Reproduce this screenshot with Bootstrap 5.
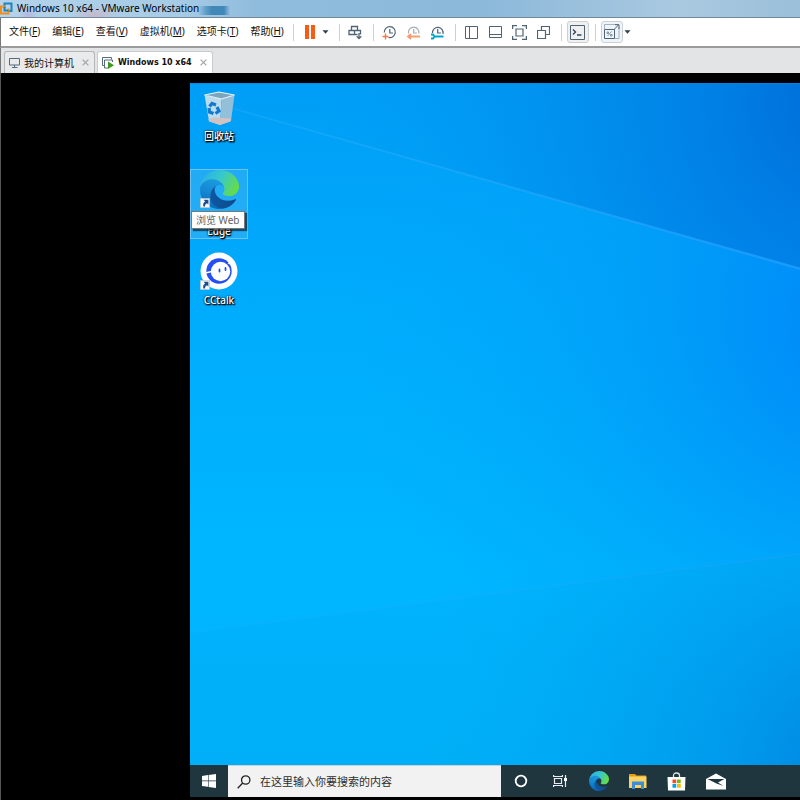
<!DOCTYPE html>
<html lang="zh-CN">
<head>
<meta charset="utf-8">
<meta name="viewport" content="width=device-width, initial-scale=1">
<title>Windows 10 x64 - VMware Workstation</title>
<link rel="stylesheet" href="https://cdn.jsdelivr.net/npm/bootstrap@5.3.0/dist/css/bootstrap.min.css">
<style>
  body { font-family: "Noto Sans", "Noto Sans CJK SC", sans-serif; font-size: 10px; line-height: 14px; color: #111; background: #000; }
  svg { display: block; flex: none; }
  button { padding: 0; border: 0; background: none; color: inherit; }
  .title-bar { height: 18px; border-bottom: 1px solid #71899c;
    background:
      linear-gradient(90deg, transparent 198px, #5f9dc9 206px, #4187b8 212px, #4187b8 224px, transparent 230px) 0 6px / 100% 9px no-repeat,
      radial-gradient(ellipse 24px 10px at 95px 15px, #c3b9cc, transparent),
      radial-gradient(ellipse 10px 8px at 28px 15px, #b7b5dc, transparent),
      linear-gradient(90deg, #b5d3ea 0, #a5cbe6 180px, #8fbbdc 260px, #8cb8da 60%, #a9c9e0 85%, #9bbfd9); }
  .title-bar h1 { font-size: inherit; line-height: 16px; color: #000; }
  .menu-bar { height: 30px; background: #fff; border-left: 1px solid #777; border-bottom: 2px solid #9b9b9b; }
  .menu-list { gap: 12px; padding: 0 4px 2px 8px; }
  .menu-list button { line-height: 14px; white-space: nowrap; }
  .tool { width: 24px; height: 22px; display: flex; align-items: center; justify-content: center; color: #4f6373; }
  .tool-caret { width: 12px; height: 22px; display: flex; align-items: center; color: #2b4054; }
  .tool-on { background: #f0f0f1; border: 1px solid #cdcfd1; border-radius: 3px; width: 22px; margin: 0 1px; }
  .tool-blue { background: #edf4fa; }
  .rule { width: 1px; height: 17px; margin: 0 4px 0 5px; background: #cfcfcf; flex: none; }
  .tab-strip { height: 25px; background: #e3e4e6; border-left: 1px solid #777; padding: 3px 3px 0; gap: 2px; }
  .vm-tab { height: 22px; border: 1px solid #b4b6b8; border-bottom: 0; border-radius: 3px 3px 0 0; background: #e9eaeb; padding: 0 5px 0 4px; gap: 4px; }
  .vm-tab.current { background: #fff; border-color: #cbcccd; }
  .tab-title { line-height: 16px; white-space: nowrap; }
  .vm-tab.current .tab-title { font-family: "DejaVu Sans", sans-serif; font-size: 8px; }
  .vm-tab .x { color: #a6a6a6; margin-left: 4px; }
  .vm-view { border-left: 1px solid #555; padding: 10px 0 3px 189px; }
  .wallpaper { z-index: 0; }
  .icon-list { z-index: 1; padding: 4px 0; gap: 12px; }
  .desk-icon { width: 58px; min-height: 70px; border: 1px solid transparent; color: #fff; text-shadow: 1px 1px 1px #000, 0 0 2px #000, 1px 1px 2px #000; font-weight: 500; }
  .desk-icon.hot { border-color: #6bc0f4; background: rgba(90, 185, 240, .38); }
  .desk-icon .art { width: 40px; height: 41px; }
  .desk-icon.hot .name { padding-top: 13px; }
  .name { line-height: 14px; }
  .tip { left: 0; top: 41px; z-index: 2; background: #fff; color: #626262; border: 1px solid #777; line-height: 16px; padding: 0 4px; white-space: nowrap; text-shadow: none; box-shadow: 2px 2px 1px rgba(0, 0, 0, .55); font-weight: 400; }
  .task-bar { z-index: 1; background: #20363f; height: 32px; }
  .task-bar button { width: 39px; display: flex; align-items: center; justify-content: center; flex: none; }
  .task-bar .start { width: 38px; }
  .search-box { flex: 0 1 273px; background: #f2f2f2; padding-left: 9px; gap: 9px; border-top: 1px solid #d0d0d0; }
  .search-box input { font-size: 11px; border: 0; background: none; outline: 0; width: 100%; padding: 0; }
  .search-box input::placeholder { color: #2e2e2e; opacity: 1; }
</style>
<script src="https://cdn.jsdelivr.net/npm/bootstrap@5.3.0/dist/js/bootstrap.bundle.min.js"></script>
</head>
<body class="d-flex flex-column min-vh-100">

<svg width="0" height="0" class="position-absolute" aria-hidden="true">
  <defs>
    <linearGradient id="edgeDark" x1="0" x2="1"><stop stop-color="#0c59a4"/><stop offset="1" stop-color="#114a8b"/></linearGradient>
    <linearGradient id="edgeMid" x1=".6" y1="0" x2=".3" y2="1"><stop stop-color="#1b9de2"/><stop offset=".5" stop-color="#1588d2"/><stop offset="1" stop-color="#0a64b4"/></linearGradient>
    <linearGradient id="edgeTop" x1="0" y1=".2" x2="1" y2=".55"><stop stop-color="#27aee8"/><stop offset=".5" stop-color="#37c8cd"/><stop offset="1" stop-color="#67dc46"/></linearGradient>
    <symbol id="edge" viewBox="0 0 256 256">
      <path fill="url(#edgeDark)" d="M231.07 190.54c-3.45 1.79-7 3.38-10.63 4.77a101.83 101.83 0 0 1-35.9 6.46c-47.32 0-88.54-32.55-88.54-74.32A31.48 31.48 0 0 1 112.46 100.05c-42.8 1.8-53.8 46.4-53.8 72.53 0 73.88 68.09 81.37 82.76 81.37 7.91 0 19.84-2.3 27-4.56l1.31-.44a128.34 128.34 0 0 0 66.6-52.8 4 4 0 0 0-5.26-5.61z"/>
      <path fill="url(#edgeMid)" d="M105.73 241.42a79.2 79.2 0 0 1-22.74-21.34A80.72 80.72 0 0 1 112.46 100.05c3.12-1.47 8.45-4.13 15.54-4a32.35 32.35 0 0 1 25.69 13 31.88 31.88 0 0 1 6.36 18.66c0-.21 24.46-79.6-80-79.6-43.9 0-80 41.66-80 78.21a130.15 130.15 0 0 0 12.11 56 128 128 0 0 0 156.38 67.11 75.55 75.55 0 0 1-62.78-8z"/>
      <path fill="url(#edgeTop)" d="M152.33 148.86c-.81 1.05-3.3 2.5-3.3 5.66 0 2.61 1.7 5.12 4.72 7.23 14.38 10 41.49 8.68 41.56 8.68a59.56 59.56 0 0 0 30.27-8.35A61.38 61.38 0 0 0 256 109.2c.26-22.41-8-37.31-11.34-43.91C223.46 23.84 177.72 0 128 0A128 128 0 0 0 0 126.2c.48-36.54 36.8-66.05 80-66.05 3.5 0 23.46.34 42 10.07 16.34 8.58 24.9 18.94 30.85 29.21 6.18 10.67 7.28 24.15 7.28 29.52s-2.74 13.33-7.8 19.91z"/>
    </symbol>
    <symbol id="shortcut" viewBox="0 0 10 10">
      <path fill="#f7f9fa" stroke="#a9b6c0" stroke-width=".6" d="M.3.3h9.4v9.4H.3z"/>
      <path fill="#1c4d90" d="M3.6 1.8h4.8v4.7L6.9 5.2C5.300 6 4.900 7.300 5 8.600H3.400C2.700 6.300 3.400 4.500 5.100 3.500z"/>
    </symbol>
    <symbol id="caret" viewBox="0 0 7 4"><path fill="currentColor" d="M.5.3h6L3.500 3.700z"/></symbol>
    <symbol id="cross" viewBox="0 0 7 7"><path fill="none" stroke="currentColor" stroke-width="1.300" d="M.6.6l5.800 5.800M6.400.6L.6 6.400"/></symbol>
  </defs>
</svg>

<header class="title-bar d-flex align-items-start">
  <svg width="13" height="16" viewBox="0 0 13 16" fill="none" stroke-width="2" aria-hidden="true">
    <path stroke="#1c86bd" d="M4.500 8V3.500H11.500V11H8.500"/>
    <path stroke="#f08d1d" d="M5 6.500H1V13.500H8.500V8.500"/>
    <path stroke="#1c86bd" d="M4.500 7V10.500H8.500"/>
  </svg>
  <h1 class="mb-0 ms-1 fw-normal">Windows 10 x64 - VMware Workstation</h1>
</header>

<nav class="menu-bar d-flex align-items-center" aria-label="菜单">
  <div class="menu-list d-flex">
    <button type="button">文件(<u>F</u>)</button>
    <button type="button">编辑(<u>E</u>)</button>
    <button type="button">查看(<u>V</u>)</button>
    <button type="button">虚拟机(<u>M</u>)</button>
    <button type="button">选项卡(<u>T</u>)</button>
    <button type="button">帮助(<u>H</u>)</button>
  </div>
  <span class="rule"></span>
  <button type="button" class="tool" aria-label="挂起"><svg width="10" height="14"><path fill="#fa5b14" d="M0 0h4v14H0zM6 0h4v14H6z"/></svg></button>
  <button type="button" class="tool-caret" aria-label="电源选项"><svg width="7" height="4"><use href="#caret"/></svg></button>
  <span class="rule"></span>
  <button type="button" class="tool" aria-label="发送 Ctrl+Alt+Del"><svg width="15" height="15" viewBox="0 0 15 15" fill="none" stroke="currentColor" stroke-width="1.300"><path d="M3.500 5V1.500h6V5M1 5.500h5.500v4H1zM6.500 5.500h6v4M6.500 9.500h3M11 8v5M8.700 11.300 11 13.600l2.300-2.300"/></svg></button>
  <span class="rule"></span>
  <button type="button" class="tool" aria-label="拍摄快照"><svg width="15" height="15" viewBox="0 0 15 15" fill="none" stroke="currentColor" stroke-width="1.200"><path d="M2.300 7.500a5.500 5.500 0 1 1 4.200 5M7.800 4v4h3.200"/><path stroke="#fa7840" stroke-width="1.400" d="M3.500 8.500v6M.5 11.500h6"/></svg></button>
  <button type="button" class="tool" aria-label="恢复快照"><svg width="15" height="15" viewBox="0 0 15 15" fill="none" stroke="#a4afb8" stroke-width="1.200"><path d="M2.500 8.500a5.300 5.300 0 1 1 10.400 0M7.700 4v4h3.200"/><path stroke="#fb9b70" stroke-width="1.800" d="M14 11.500H2.500M5 9l-3 2.500L5 14"/></svg></button>
  <button type="button" class="tool" aria-label="管理快照"><svg width="15" height="15" viewBox="0 0 15 15" fill="none" stroke="currentColor" stroke-width="1.200"><path d="M2.500 8a5.300 5.300 0 1 1 10.400 1M7.700 4v4h3.200"/><path stroke="#00a6c9" stroke-width="2" d="M5 11.500h8.500M1 9.500h2l1.500 2L3 13.500H1"/></svg></button>
  <span class="rule"></span>
  <button type="button" class="tool" aria-label="显示库"><svg width="13" height="13" fill="none" stroke="currentColor"><path d="M.5.5h12v12H.5zM4.500.5v12"/></svg></button>
  <button type="button" class="tool" aria-label="缩略图栏"><svg width="13" height="13" fill="none" stroke="currentColor"><path d="M.5.5h12v11H.5zM.5 8.500h12"/></svg></button>
  <button type="button" class="tool" aria-label="全屏"><svg width="15" height="15" fill="none" stroke="currentColor"><path stroke-width="1.300" d="M.6 4V.6H5M10 .6h4.400V4M14.400 11v3.400H10M5 14.400H.6V11"/><path stroke-width="1.200" d="M4 4h7v7H4z"/></svg></button>
  <button type="button" class="tool" aria-label="Unity"><svg width="13" height="13" fill="none" stroke="currentColor"><path stroke-width="1.200" d="M4.500 4.500v-4h8v8h-4M.5 4.500h8v8h-8z"/></svg></button>
  <span class="rule"></span>
  <button type="button" class="tool tool-on" aria-label="控制台视图"><svg width="15" height="15" fill="none" stroke="currentColor"><path d="M.5.5h14v14H.5z"/><path stroke="#33475a" stroke-width="1.400" d="M3 4.500l2.500 2.500L3 9.500M7 10h4.500"/></svg></button>
  <span class="rule"></span>
  <button type="button" class="tool tool-on tool-blue" aria-label="拉伸"><svg width="16" height="16" fill="none" stroke="currentColor"><path stroke-opacity=".45" d="M.5 5V.5H14M15 3v11.500h-4"/><path d="M.5 5.500h10v9H.5zM10 5.500L14.500 1M11 .7h4V5"/><path stroke-width=".9" stroke-opacity=".7" d="M3.500 12l4-4.500M3 8h1.500v1.500H3zM6.500 10.500H8V12H6.500z"/></svg></button>
  <button type="button" class="tool-caret me-auto" aria-label="拉伸选项"><svg width="7" height="4"><use href="#caret"/></svg></button>
</nav>

<div class="tab-strip d-flex">
  <div class="vm-tab d-flex align-items-center">
    <svg width="11" height="11" fill="none" stroke="#566b7b"><path d="M.5 1.500h10v6.500H.5zM5.500 8v2M3 10.500h5.500"/></svg>
    <button type="button" class="tab-title">我的计算机</button>
    <button type="button" class="x" aria-label="关闭 我的计算机"><svg width="7" height="7"><use href="#cross"/></svg></button>
  </div>
  <div class="vm-tab current d-flex align-items-center">
    <svg width="12" height="12" fill="none" stroke="#566b7b"><path d="M2.500 8.500h-2v-8h9v2M10.500 5V3h-8v8H6"/><path fill="#3c9a1e" stroke="none" d="M6 4.500l6 3.800L6 12z"/></svg>
    <button type="button" class="tab-title fw-bold">Windows 10 x64</button>
    <button type="button" class="x" aria-label="关闭 Windows 10 x64"><svg width="7" height="7"><use href="#cross"/></svg></button>
  </div>
</div>

<main class="vm-view flex-grow-1 d-flex">
  <div class="position-relative flex-grow-1 d-flex flex-column">
    <svg class="wallpaper position-absolute top-0 start-0 w-100 h-100" viewBox="0 0 610 714" preserveAspectRatio="none" aria-hidden="true">
      <defs>
        <linearGradient id="base" x1="0" y1="0" x2="0" y2="1"><stop stop-color="#009ef6"/><stop offset=".3" stop-color="#00abfc"/><stop offset=".68" stop-color="#00b7ff"/><stop offset="1" stop-color="#00b0f8"/></linearGradient>
        <radialGradient id="corner" gradientUnits="userSpaceOnUse" cx="650" cy="20" r="520"><stop stop-color="#006cd8"/><stop offset=".25" stop-color="#007be2" stop-opacity=".85"/><stop offset=".6" stop-color="#0088e8" stop-opacity=".5"/><stop offset="1" stop-color="#0096f0" stop-opacity="0"/></radialGradient>
        <radialGradient id="side" gradientUnits="userSpaceOnUse" cx="680" cy="240" r="520"><stop stop-color="#0086fa"/><stop offset=".25" stop-color="#008ff8" stop-opacity=".8"/><stop offset=".6" stop-color="#009cf6" stop-opacity=".4"/><stop offset="1" stop-color="#00a4fa" stop-opacity="0"/></radialGradient>
        <radialGradient id="foot" gradientUnits="userSpaceOnUse" cx="670" cy="690" r="440"><stop stop-color="#0084e0"/><stop offset=".45" stop-color="#0098ea" stop-opacity=".6"/><stop offset="1" stop-color="#00a8f2" stop-opacity="0"/></radialGradient>
        <linearGradient id="beam" x1="0" x2="1"><stop stop-color="#38b4ff" stop-opacity=".3"/><stop offset="1" stop-color="#20a0ff" stop-opacity=".8"/></linearGradient>
      </defs>
      <path fill="url(#base)" d="M0 0h610v714H0z"/>
      <path fill="#0098e4" fill-opacity=".08" d="M0 549L610 471v243H0z"/>
      <path fill="url(#side)" d="M0 0h610v471L0 549z"/>
      <path fill="url(#corner)" d="M0 0h610v186L44 26 0 14z"/>
      <path fill="url(#foot)" d="M0 549L610 471v243H0z"/>
      <path fill="url(#beam)" d="M44 25L610 184.500v2.500L44 26.500z"/>
      <path fill="url(#beam)" fill-opacity=".4" d="M0 549L610 470v2L0 550.500z"/>
      <path fill="#0088e8" fill-opacity=".7" d="M0 0h610v1H0z"/>
    </svg>

    <div class="icon-list position-relative flex-grow-1 d-flex flex-column align-items-start">
      <button type="button" class="desk-icon d-flex flex-column align-items-center">
        <svg class="art" viewBox="0 0 40 41">
          <path fill="#bcdcee" d="M5.500 7l17 4-1.500 26L10 33z"/>
          <path fill="#93bfd9" d="M22.500 11l13-4-3.500 26-11 4z"/>
          <path fill="#7ba6be" d="M5.500 7L20 4l15.500 3-13 4z"/>
          <path fill="none" stroke="#e6f2f8" stroke-width="1.200" d="M5.500 7L20 4l15.500 3-13 4z"/>
          <path fill="#d2c3c0" d="M9.500 31l6-1.500 16.500 1-.5 3-10.500 3.500L10 33.500z"/>
          <g fill="none" stroke="#1279cf" stroke-width="3.200"><path d="M10.500 18.500l2.500-3 4 1.500"/><path d="M18 19l2 4-3.500 2.500"/><path d="M14.500 25.500l-4-1.500-.5-4"/></g>
        </svg>
        <span class="name">回收站</span>
      </button>
      <button type="button" class="desk-icon hot position-relative d-flex flex-column align-items-center" aria-label="Edge">
        <svg class="art" viewBox="0 0 40 41"><use href="#edge" x="1" y="0" width="39" height="39"/><use href="#shortcut" x="1" y="28" width="10" height="10"/></svg>
        <span class="name">Edge</span>
        <span class="tip position-absolute">浏览 Web</span>
      </button>
      <button type="button" class="desk-icon d-flex flex-column align-items-center">
        <svg class="art" viewBox="0 0 40 41">
          <circle cx="20" cy="19" r="18.500" fill="#fff"/>
          <circle cx="20" cy="19" r="12.700" fill="#2450f2"/>
          <circle cx="21.500" cy="19.500" r="9.700" fill="#fff"/>
          <path stroke="#fff" stroke-width="1.300" d="M6 21l7-1.500M29 11l4.500 2"/>
          <path stroke="#2450f2" stroke-width="1.800" stroke-linecap="round" d="M20.500 17.500v2M26.500 16v2"/>
          <use href="#shortcut" x="1" y="28" width="10" height="10"/>
        </svg>
        <span class="name">CCtalk</span>
      </button>
    </div>

    <div class="task-bar position-relative d-flex">
      <button type="button" class="start" aria-label="开始"><svg width="14" height="14" viewBox="0 0 14 14" fill="#fff"><path d="M0 2l6-.9v5.500H0zM6.600 1L14 0v6.600H6.600zM0 7.200h6v5.600L0 12zM6.600 7.200H14V14l-7.400-1z"/></svg></button>
      <label class="search-box d-flex align-items-center">
        <svg width="14" height="14" fill="none" stroke="#222" stroke-width="1.300"><circle cx="8.700" cy="5" r="4.200"/><path d="M5.700 8L.7 13.200"/></svg>
        <input type="text" placeholder="在这里输入你要搜索的内容" aria-label="搜索">
      </label>
      <button type="button" aria-label="Cortana"><svg width="14" height="14"><circle cx="7" cy="7" r="5.300" fill="none" stroke="#fff" stroke-width="1.800"/></svg></button>
      <button type="button" aria-label="任务视图"><svg width="14" height="14" fill="none" stroke="#e8ecee" stroke-width="1.200"><path d="M.6 1v1.500h8.800V1M.6 13v-1.500h8.800V13M1.500 4.500h7v5h-7zM12.500 1v3M12.500 7v6"/><path fill="#fff" stroke="none" d="M11 4h3v3h-3z"/></svg></button>
      <button type="button" aria-label="Microsoft Edge"><svg width="20" height="20"><use href="#edge" width="20" height="20"/></svg></button>
      <button type="button" aria-label="文件资源管理器"><svg width="18" height="16"><path fill="#e89b12" d="M0 1h6l1.500 1.500H17V8H0z"/><path fill="#fcd466" d="M0 3.500h17.500V15H0z"/><path fill="#3b8edb" d="M3 8.500h12V16h-3v-4H6v4H3z"/></svg></button>
      <button type="button" aria-label="应用商店"><svg width="19" height="19"><path fill="none" stroke="#dfe4e6" stroke-width="1.300" d="M6.500 6V3.500Q6.500 1 9.500 1t3 2.500V6"/><path fill="#fff" d="M.5 5h18l-.5 13.500H1z"/><path fill="#f04e23" d="M5.500 7.500h3.700v3.700H5.500z"/><path fill="#7db700" d="M10 7.500h3.700v3.700H10z"/><path fill="#00a1ed" d="M5.500 12h3.700v3.700H5.500z"/><path fill="#fcb900" d="M10 12h3.700v3.700H10z"/></svg></button>
      <button type="button" aria-label="邮件"><svg width="20" height="17"><path fill="#fff" d="M0 6l10-5.500L20 6v10.500H0z"/><path fill="#20363f" d="M1.500 6h17L12 9.500l5.500 3.500-7-2.500z"/></svg></button>
    </div>
  </div>
</main>
</body>
</html>
